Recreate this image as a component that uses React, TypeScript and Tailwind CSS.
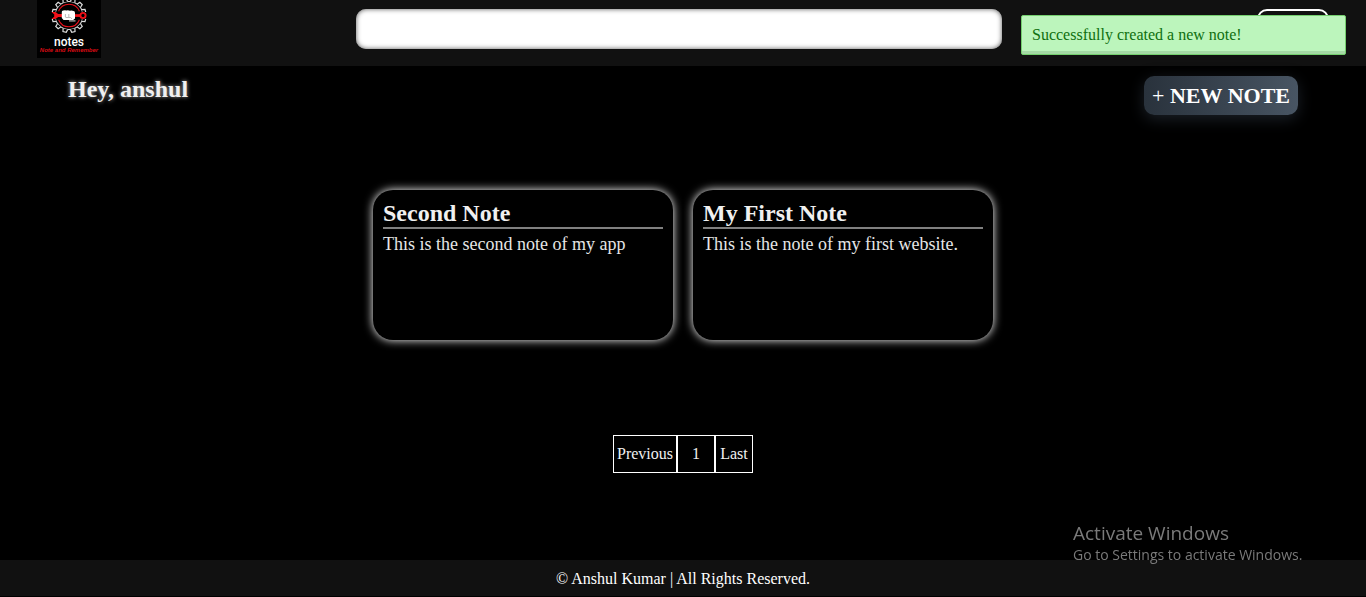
const notes = [
  { id: 2, title: "Second Note", body: "This is the second note of my app" },
  { id: 1, title: "My First Note", body: "This is the note of my first website." },
];

const teeth = Array.from({ length: 12 }, (_, i) => i * 30 + 15);

function Logo() {
  return (
    <svg viewBox="0 0 64 58" className="h-[58px] w-16" role="img" aria-label="notes">
      <rect width="64" height="58" fill="#000" />
      <g transform="translate(32 15.5)">
        <circle r="14" fill="none" stroke="#ddd" strokeWidth="1.1" />
        {teeth.map((angle) => (
          <g key={angle} transform={`rotate(${angle})`}>
            <path d="M-2.3-14 L-1.7-17 H1.7 L2.3-14" fill="#000" stroke="#ddd" strokeWidth="1.2" />
          </g>
        ))}
        <path d="M-18-3.5H18V3.5H-18Z" fill="#000" />
        <path d="M-10.4-4.2A11.2 11.2 0 0 1 10.4-4.2M10.4 4.2A11.2 11.2 0 0 1-10.4 4.2" fill="none" stroke="#e8101a" strokeWidth="1.1" />
        <path d="M-17.5-3.4 H-13.5 L-10.8-1.4 H-7 V1.4 H-10.8 L-13.5 3.4 H-17.5 L-14.8 1.3 V-1.3Z" fill="#f01018" />
        <path d="M6-1.3H12V1.4H6Z" fill="#f01018" />
        <circle cx="14" r="2.6" fill="#000" stroke="#f01018" strokeWidth="1.9" />
        <path d="M-7.2-3.4 Q-7.2-5.2-5.6-5 Q-4-5.6-2.6-5 Q-.8-5.6 1-4.8 Q3-5.4 4.5-4.4 Q6-4.4 6-2.4 V3 L4.2 4.6 H-5.5 L-7.2 2.5Z" fill="#fff" />
        <path d="M-3.6-1.5V1.5M-.2-1.5V1.5" fill="none" stroke="#777" strokeWidth=".5" />
        <path d="M-3.5 2H1.5L3 3.4" fill="none" stroke="#777" strokeWidth=".5" />
        <path d="M0 5.4H6.5" stroke="#bbb" strokeWidth="1.2" />
      </g>
      <text x="32" y="46" textAnchor="middle" fill="#fff" fontSize="12" fontFamily="Roboto, sans-serif" fontWeight="500">
        notes
      </text>
      <text x="32" y="52" textAnchor="middle" fill="#d80c14" fontSize="6" fontFamily="Liberation Sans, sans-serif" fontWeight="700" fontStyle="italic">
        Note and Remember
      </text>
    </svg>
  );
}

export default function App() {
  return (
    <div className="flex min-h-screen flex-col bg-black pb-px font-['Liberation_Serif',serif] text-base text-[#f0f0f0]">
      <header className="flex h-[66px] items-start justify-between bg-[#111] px-[37px]">
        <a href="#home">
          <Logo />
        </a>
        <input
          type="search"
          aria-label="Search notes"
          className="mt-[9px] h-10 w-1/2 rounded-[10px] bg-white px-3 text-black shadow-[inset_0_0_5px_#555] outline-none"
        />
        <button type="button" className="mt-[9px] h-10 w-18 rounded-[10px] border-2 border-white text-white">
          Logout
        </button>
      </header>

      <div
        role="status"
        className="fixed top-[15px] right-5 w-[325px] rounded-xs border border-[#74cf6e] bg-[#bcf5bc] px-2.5 pt-[7px] pb-[7px] leading-6 text-[#0f6f0f] shadow-[inset_0_-3px_0_#a5d9a5]"
      >
        Successfully created a new note!
      </div>

      <main className="flex grow flex-col">
        <div className="flex items-start justify-between px-[68px] pt-2.5">
          <h1 className="text-2xl leading-[26px] font-bold [text-shadow:0_0_4px_#aaa]">Hey, anshul</h1>
          <button
            type="button"
            className="h-[39px] rounded-[10px] bg-linear-to-r from-[#29323c] to-[#485563] px-2 text-[22px] leading-9 font-bold text-white shadow-[0_4px_15px_rgba(45,54,65,0.6)]"
          >
            <span className="font-normal">+</span> NEW NOTE
          </button>
        </div>

        <section aria-label="Notes" className="mt-[75px] flex flex-wrap justify-center gap-5 px-5">
          {notes.map((note) => (
            <article key={note.id} className="h-[150px] w-[300px] rounded-[20px] bg-black p-2.5 shadow-[0_0_10px_#fff]">
              <h2 className="border-b-2 border-[#808080] text-2xl leading-[27px] font-bold">{note.title}</h2>
              <p className="mt-1 text-lg leading-[22px] text-[#e6e6e6]">{note.body}</p>
            </article>
          ))}
        </section>

        <nav aria-label="Pagination" className="mt-[95px] flex justify-center">
          <button type="button" className="h-[38px] w-16 border border-white">Previous</button>
          <button type="button" className="size-[38px] border border-white">1</button>
          <button type="button" className="size-[38px] border border-white">Last</button>
        </nav>
      </main>

      <footer className="h-9 bg-[#111] text-center leading-[38px] text-white">
        © Anshul Kumar | All Rights Reserved.
      </footer>

      <aside className="pointer-events-none fixed right-[57px] bottom-8 w-[236px] font-['Open_Sans',sans-serif] text-[#7a7a7a]">
        <p className="text-[19px] leading-6">Activate Windows</p>
        <p className="text-sm leading-5">Go to Settings to activate Windows.</p>
      </aside>
    </div>
  );
}
